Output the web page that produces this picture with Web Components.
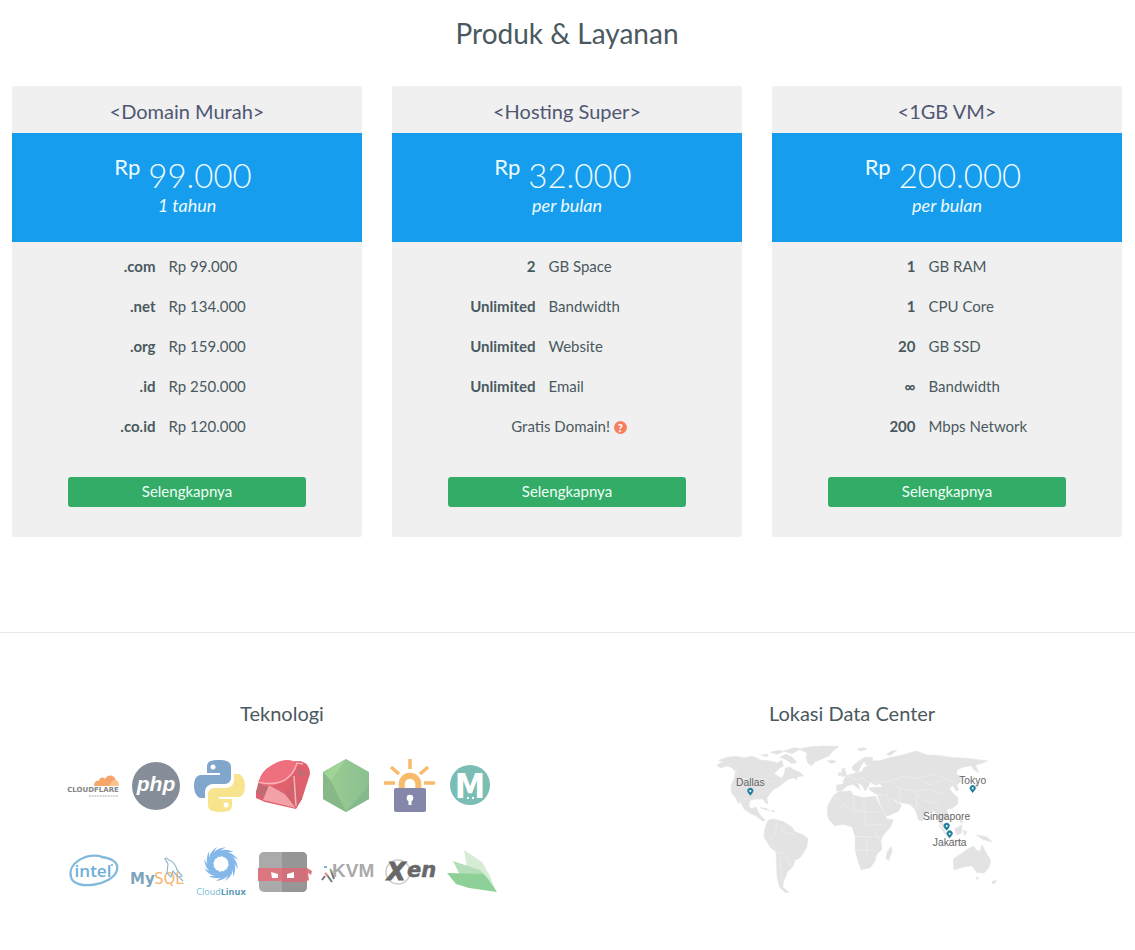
<!DOCTYPE html>
<html lang="id">
<head>
<meta charset="utf-8">
<meta name="viewport" content="width=device-width, initial-scale=1">
<title>Produk &amp; Layanan</title>
<style>
  body {
    margin: 0;
    background: #fff;
    color: #4a595e;
    font-family: Lato, "Open Sans", sans-serif;
    font-size: 15px;
    line-height: 20px;
  }
</style>
</head>
<body>

<page-section heading="Produk &amp; Layanan">
  <price-card heading="&lt;Domain Murah&gt;" price="99.000" period="1 tahun"
    rows=".com|Rp 99.000;.net|Rp 134.000;.org|Rp 159.000;.id|Rp 250.000;.co.id|Rp 120.000"></price-card>
  <price-card heading="&lt;Hosting Super&gt;" price="32.000" period="per bulan"
    rows="2|GB Space;Unlimited|Bandwidth;Unlimited|Website;Unlimited|Email">
    <span>Gratis Domain! <help-badge></help-badge></span>
  </price-card>
  <price-card heading="&lt;1GB VM&gt;" price="200.000" period="per bulan"
    rows="1|GB RAM;1|CPU Core;20|GB SSD;∞|Bandwidth;200|Mbps Network"></price-card>
</page-section>

<page-section class="info">
  <info-column heading="Teknologi"><tech-logos></tech-logos></info-column>
  <info-column heading="Lokasi Data Center"><world-map></world-map></info-column>
</page-section>

<script>
class PageSection extends HTMLElement {
  constructor() {
    super();

    const shadow = this.attachShadow({ mode: "open" });

    shadow.innerHTML = `
      <style>
        :host {
          display: block;
          padding: 15px 13px 95px 12px;
        }

        :host(.info) {
          border-top: 1px solid #e8e8e8;
          padding-top: 68px;
          padding-bottom: 48px;
        }

        h1 {
          margin: 0 0 35px;
          font-size: 28px;
          font-weight: 400;
          line-height: 36px;
          text-align: center;
        }

        .columns {
          display: grid;
          grid-auto-flow: column;
          grid-auto-columns: minmax(0, 1fr);
          gap: 30px;
        }
      </style>

      <div class="columns"><slot></slot></div>
    `;

    if (this.hasAttribute("heading")) {
      const title = document.createElement("h1");
      title.textContent = this.getAttribute("heading");
      shadow.querySelector(".columns").before(title);
    }
  }
}

class PriceCard extends HTMLElement {
  constructor() {
    super();

    const shadow = this.attachShadow({ mode: "open" });

    shadow.innerHTML = `
      <style>
        :host {
          display: flex;
          flex-direction: column;
          background: #f0f0f0;
          border-radius: 2px;
        }

        h2 {
          margin: 0;
          padding: 13px 0 10px;
          color: #4f5773;
          font-size: 20px;
          font-weight: 400;
          line-height: 24px;
          text-align: center;
        }

        .price {
          padding: 22px 0 27px;
          background: #169ded;
          color: #effbff;
          text-align: center;
        }

        .amount {
          display: flex;
          justify-content: center;
          gap: 8px;
          padding-right: 8px;
          font-size: 33px;
          font-weight: 300;
          line-height: 40px;
        }

        .currency {
          font-size: 22px;
          font-weight: 400;
          line-height: 24px;
        }

        .period {
          font-size: 18px;
          font-style: italic;
          line-height: 20px;
        }

        table {
          width: 100%;
          margin-top: 4px;
          border-collapse: collapse;
          table-layout: fixed;
        }

        th, td {
          height: 40px;
          padding: 0;
          font-weight: 400;
          text-align: left;
        }

        th {
          width: 41%;
          padding-right: 13px;
          font-weight: 700;
          text-align: right;
        }

        .note {
          line-height: 40px;
          padding-left: 4px;
          text-align: center;
        }

        button {
          width: 68%;
          height: 30px;
          margin: 31px auto 30px 56px;
          padding: 0 0 2px;
          border: 0;
          border-radius: 3px;
          background: #32ac67;
          color: #effff5;
          font: inherit;
        }
      </style>

      <h2></h2>
      <div class="price">
        <div class="amount"><span class="currency">Rp</span><span class="value"></span></div>
        <div class="period"></div>
      </div>
      <table><tbody></tbody></table>
      <div class="note"><slot></slot></div>
      <button type="button">Selengkapnya</button>
    `;

    shadow.querySelector("h2").textContent = this.getAttribute("heading");
    shadow.querySelector(".value").textContent = this.getAttribute("price");
    shadow.querySelector(".period").textContent = this.getAttribute("period");

    const body = shadow.querySelector("tbody");
    this.getAttribute("rows").split(";").forEach((row) => {
      const [label, value] = row.split("|");
      const tr = body.insertRow();
      const th = document.createElement("th");
      th.scope = "row";
      th.textContent = label;
      tr.append(th);
      tr.insertCell().textContent = value;
    });

    if (!this.children.length) {
      shadow.querySelector(".note").remove();
    }
  }
}

class HelpBadge extends HTMLElement {
  constructor() {
    super();

    this.attachShadow({ mode: "open" }).innerHTML = `
      <style>
        :host {
          display: inline-flex;
          align-items: center;
          justify-content: center;
          width: 13px;
          height: 13px;
          border-radius: 50%;
          background: #f5805f;
          color: #fff;
          font-size: 11px;
          font-weight: 900;
          line-height: 13px;
        }
      </style>
      ?
    `;
  }
}

class InfoColumn extends HTMLElement {
  constructor() {
    super();

    this.attachShadow({ mode: "open" }).innerHTML = `
      <style>
        :host {
          display: flex;
          flex-direction: column;
          align-items: center;
        }

        h2 {
          margin: 0 0 15px;
          font-size: 20px;
          font-weight: 400;
          line-height: 24px;
        }
      </style>

      <h2></h2>
      <slot></slot>
    `;

    this.shadowRoot.querySelector("h2").textContent = this.getAttribute("heading");
  }
}

const swirl = Array.from({ length: 12 }, (_, i) =>
  `<path d="M27 12q12-6 20 6q-8-6-19-3z" transform="rotate(${i * 30} 30 22)"/>`).join("");

const snake = "M28 2C17 2 16 5 16 9v6h13v2H10c-5 0-7 5-7 11s3 12 7 12h4v-6c0-5 4-8 8-8h12c3 0 6-3 6-6V9c0-5-4-7-12-7z";

const logos = {
  Cloudflare: `
    <path fill="#f6a56b" d="M29 28c0-4 2-6 5-5c0-3 4-5 6-2c3-6 11-4 11 3l-2 4z"/>
    <path fill="#fbc48d" d="M44 28c2-3 3-6 6-6c3 0 4 3 4 6z"/>
    <text x="28" y="34" text-anchor="middle" font-family="DejaVu Sans" font-size="7" font-weight="700" fill="#858585">CLOUDFLARE</text>
    <path d="M24 38h29" stroke="#ccc" stroke-width="1.3" stroke-dasharray="2 .7"/>`,
  PHP: `
    <circle cx="28" cy="28" r="24" fill="#858d99"/>
    <text x="28" y="33" text-anchor="middle" font-family="Liberation Sans" font-size="21" font-weight="700" font-style="italic" fill="#fff">php</text>`,
  Python: `
    <path fill="#80a6cc" d="${snake}"/><circle cx="22" cy="9" r="2.5" fill="#fff"/>
    <g transform="rotate(180 28.5 28)"><path fill="#f8e48d" d="${snake}"/><circle cx="22" cy="9" r="2.5" fill="#fff"/></g>`,
  Ruby: `
    <path fill="#e0606e" d="M2 34l3-12l9-12l14-6l18-1q10 2 10 13l-8 25l-6 10l-31-7l-9-4z"/>
    <path fill="#c26a72" d="M2 34l3-8l10 1l-4 14zM15 27l-1 14l17-5l9-16zM44 10l11 6l-11 3z"/>
    <path fill="#f3a1a6" d="M9 42l6-15l16 9l11 14z"/>
    <path fill="#d2636e" d="M31 36l9-16l8 21l-6 9z"/>
    <path fill="#e0606e" d="M15 27l16 9l9-16l-9 3z"/>
    <ellipse cx="24" cy="15" rx="20" ry="10" transform="rotate(-28 24 15)" fill="#ee6f7e"/>
    <path fill="none" stroke="#f6b4b8" stroke-width="1.5" d="M4 24q15 4 27-2q9-6 12-17l6 1M40 18l2 30"/>`,
  "Node.js": `
    <linearGradient id="node"><stop offset=".2" stop-color="#98cb91"/><stop offset="1" stop-color="#8bbf90"/></linearGradient>
    <path fill="url(#node)" d="M29 1l23 13v27L29 54L6 41V14z"/>
    <path fill="#87b887" d="M14 22L6 41V14zM14 23L6 41l23 13z"/>
    <path fill="#84b98d" d="M52 27v14L29 54z"/>
    <path fill="#a0d398" d="M29 1L6 14l8 9z"/>`,
  "Let's Encrypt": `
    <g fill="none" stroke="#f8bb6c" stroke-width="3.5"><path d="M30 1v10M11 9l8 7M48 9l-8 7M4 25h11M44 25h11"/>
    <path stroke-width="6" d="M21.7 31v-5a8.3 8.3 0 0 1 16.6 0v5"/></g>
    <rect x="14" y="30" width="32" height="24" rx="2" fill="#8486aa"/>
    <circle cx="30" cy="40" r="3.3" fill="#fff"/><path fill="#fff" d="M28.5 40h3v7h-3z"/>`,
  Mailcow: `
    <circle cx="27" cy="27" r="20" fill="#79bdb4"/>
    <text x="27" y="40" text-anchor="middle" font-family="DejaVu Sans Condensed, DejaVu Sans" font-size="34" font-weight="700" fill="#fff">M</text>
    <path d="M24 40h2M29 40h2" stroke="#fff" stroke-width="2"/>`,
  Intel: `
    <path fill="none" stroke="#82b9dc" stroke-width="2.3" d="M38 15C22 10 2 21 6 35c3 14 42 9 46-7c2-8-6-12-16-13"/>
    <text x="28" y="35" text-anchor="middle" font-family="Open Sans" font-size="17" font-weight="600" fill="#6caed8">intel</text>
    <circle cx="47" cy="23" r="1" fill="#6caed8"/>`,
  MySQL: `
    <text x="2" y="42" font-family="DejaVu Sans" font-size="15" font-weight="700" fill="#7fa5bc">My</text>
    <text x="26" y="42" font-family="DejaVu Sans" font-size="15" fill="#f4b770">SQL</text>
    <path fill="none" stroke="#94b5c8" stroke-width="1.2" d="M55 39l-4-4l3-1l-5-6q-2-8-8-10q-4-3-4-1l3 5l-1 9l4 4l2-6l5 6"/>`,
  CloudLinux: `
    <g fill="#84b8e9">${swirl}</g>
    <text x="30" y="53" text-anchor="middle" font-family="Open Sans" font-size="9" fill="#73bdd9">Cloud<tspan font-weight="700" fill="#5a9cb4">Linux</tspan></text>`,
  Ninja: `
    <rect x="5" y="10" width="48" height="40" rx="5" fill="#aaa"/>
    <path fill="#969696" d="M28 10h20q5 0 5 5v30q0 5-5 5H28z"/>
    <path fill="#dc7780" d="M4 26h49l5 3l-1 4l-3-2l1 7l-2 1H4z"/><path fill="#d0707a" d="M28 26h25v14H28z"/>
    <path fill="#fff" d="M17 30l7 2v4h-6zM40 30l-7 2v4h7z"/>`,
  KVM: `
    <text x="15" y="35" font-family="Liberation Sans" font-size="19" font-weight="700" fill="#aaa">KVM</text>
    <g fill="none" stroke-width="2"><path stroke="#777" d="M10 33l5 7M14 29l3 8M5 38l3-4"/><path stroke="#d88" d="M8 31l3 3"/><path stroke="#7bb9cc" d="M7 25h3"/><path stroke="#8a8" d="M13 27l2 3"/></g>`,
  Xen: `
    <circle cx="18" cy="30" r="12" fill="none" stroke="#ccc" stroke-width="1.5"/>
    <g font-family="DejaVu Sans" font-weight="700" font-style="italic" fill="#686868" stroke="#686868">
    <text x="7" y="38" font-size="24">X</text>
    <text x="27" y="35" font-size="21" stroke-width=".5">en</text></g>`,
  Leaves: `
    <path fill="#d6ecd5" d="M21 8l18 12l8 14l6 16l-29-24z"/>
    <path fill="#b4deb8" d="M10 19l27 9l7 7l9 15l-36-17z"/>
    <path fill="#8dd199" d="M4 31l36 1l5 5l9 13l-28-4l-13-4z"/>`
};

class TechLogos extends HTMLElement {
  constructor() {
    super();

    this.attachShadow({ mode: "open" }).innerHTML = `
      <style>
        :host {
          display: grid;
          grid-template-columns: repeat(7, 56px);
          gap: 28px 7px;
          padding-top: 18px;
        }

        svg {
          display: block;
          width: 56px;
          height: 56px;
          overflow: visible;
        }
      </style>
    ` + Object.entries(logos).map(([name, art]) =>
      `<svg viewBox="0 0 56 56" role="img" aria-label="${name}">${art}</svg>`).join("");
  }
}

const cities = [
  { name: "Dallas", x: 151, y: 182, labelY: 152 },
  { name: "Tokyo", x: 818, y: 174, labelY: 146 },
  { name: "Singapore", x: 740, y: 287, labelY: 255 },
  { name: "Jakarta", x: 749, y: 310, labelY: 334 }
];

class WorldMap extends HTMLElement {
  constructor() {
    super();

    this.attachShadow({ mode: "open" }).innerHTML = `
      <style>
        :host {
          display: block;
          width: 290px;
          max-width: 100%;
        }

        svg {
          display: block;
          width: 100%;
          overflow: visible;
        }

        text {
          font: 31px "Liberation Sans", sans-serif;
          fill: #666;
          text-anchor: middle;
        }
      </style>

      <svg viewBox="21 15 870 480" role="img" aria-label="Lokasi Data Center">
        <g fill="#e3e3e3" stroke="#e3e3e3" stroke-width="2" stroke-linejoin="round">
          <path d="M50 92L60 84L75 82L56 76L80 68L105 64L150 72L185 76L210 78L232 84L245 76L250 92L238 100L228 110L222 116L235 124L245 130L252 118L256 100L270 96L280 104L300 112L310 122L290 126L265 132L250 144L240 152L220 164L205 182L200 190L204 206L196 204L190 192L165 192L150 196L146 212L154 222L168 216L172 226L180 240L196 256L188 258L170 244L150 234L132 222L122 200L116 206L108 190L94 172L94 150L104 128L106 108L96 98L80 92L62 98z"/>
          <path d="M132 70L155 64L178 72L160 78zM184 60L204 58L200 66zM212 52L236 46L250 50L230 58zM240 66L258 58L276 66L290 82L276 86L262 76zM250 48L285 38L300 42L276 56zM282 128L292 127L290 134zM180 218L198 220L208 226L196 224zM214 226L224 228L216 231z"/>
          <path d="M298 42L330 36L370 33L416 35L398 48L388 62L364 72L346 80L334 92L324 84L318 66L322 54zM382 78L400 75L408 80L394 85z"/>
          <path d="M204 256L220 252L250 260L275 276L285 290L310 300L324 312L320 335L310 355L300 368L285 376L278 395L262 410L256 428L250 440L248 456L266 472L255 472L240 458L232 430L230 395L228 350L210 335L192 305L194 285z"/>
          <path d="M384 212L400 182L416 170L452 168L458 180L490 188L526 184L536 205L550 230L560 252L580 254L572 275L550 300L542 318L546 342L530 358L524 380L510 398L484 404L474 378L466 345L466 305L456 275L430 268L404 272L388 255L382 240zM574 335L576 350L566 376L558 370L562 350z"/>
          <path d="M532 182L565 178L585 200L604 210L596 228L560 244L550 228z"/>
          <path d="M410 150L430 148L430 136L440 122L460 116L486 110L492 98L510 90L516 78L540 77L570 68L600 62L650 48L680 60L720 62L760 68L800 70L862 78L840 86L826 90L836 112L822 104L814 92L790 96L772 104L768 118L782 124L782 140L770 150L776 164L768 168L760 152L748 158L756 172L774 188L772 208L756 220L740 222L744 244L736 256L722 240L726 262L740 285L730 280L718 262L710 236L700 228L682 232L666 258L656 254L646 224L630 208L596 202L560 178L530 178L510 166L508 158L548 156L540 146L526 150L512 142L496 168L486 150L472 142L480 164L460 148L442 152L426 166L410 168z"/>
          <path d="M460 106L456 96L474 80L496 66L518 68L516 84L500 92L492 78L480 98L474 112zM426 102L434 100L440 122L426 124zM416 114L424 112L423 122L416 122zM472 42L490 38L500 42L482 48zM560 58L574 48L590 46L570 62z"/>
          <path d="M716 270L752 306L744 308zM764 282L786 270L784 294L770 300zM754 314L786 318L780 322zM790 286L800 290L794 302zM778 242L788 262L782 264zM830 300L860 306L876 320L850 314zM818 166L834 156L838 142L830 142L828 154L812 162z"/>
          <path d="M760 372L790 352L800 344L820 334L830 346L840 350L846 330L856 350L872 376L868 395L852 414L830 412L815 392L790 396L762 404zM828 426L836 428L832 434zM876 440L888 434L886 444L878 446z"/>
        </g>
        <g fill="none" stroke="#eee" stroke-width="2">
          <path d="M108 96V120M105 132H190L220 142M120 190L146 192M230 262L226 300L206 310M228 350L250 356L276 396M240 372L246 440M286 300L240 288"/>
          <path d="M400 184L430 208L456 224L490 230M430 208L408 230M460 182L464 224M492 190V230H534M496 230V270H560M466 305H548M470 345H520M500 306V372M520 280L540 320"/>
          <path d="M440 122L470 134L490 128L500 142M500 142H530L570 138L610 124L650 130L700 118L760 140M570 138L600 160L640 168M600 160V202M650 130L690 150L730 136M640 168L670 196L710 206M650 176V224M640 168L690 164L740 180M710 206L726 226M560 178L570 210"/>
        </g>
      </svg>
    `;

    const svg = this.shadowRoot.querySelector("svg");
    svg.innerHTML += cities.map((city) => `
      <path fill="#20809f" transform="translate(${city.x} ${city.y})" d="M0 0l-7-9a9 9 0 1 1 14 0z"/>
      <circle cx="${city.x}" cy="${city.y - 14}" r="3" fill="#fff"/>
      <text x="${city.x}" y="${city.labelY}">${city.name}</text>
    `).join("");
  }
}

customElements.define("page-section", PageSection);
customElements.define("price-card", PriceCard);
customElements.define("help-badge", HelpBadge);
customElements.define("info-column", InfoColumn);
customElements.define("tech-logos", TechLogos);
customElements.define("world-map", WorldMap);
</script>
</body>
</html>
